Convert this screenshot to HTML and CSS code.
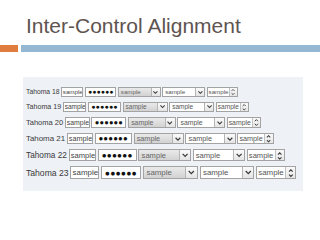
FILE: index.html
```html
<!DOCTYPE html>
<html lang="en">
<head>
    <meta charset="UTF-8">
    <title>Inter-Control Alignment</title>
    <link rel="stylesheet" href="styles.css">
</head>
<body>

<h1 class="title">Inter-Control Alignment</h1>
<div class="rule">
    <div class="rule-accent"></div>
    <div class="rule-main"></div>
</div>

<div class="panel">
    <div class="row s18">
        <span class="label">Tahoma 18</span>
        <span class="box text">sample</span>
        <span class="box pass">&#9679;&#9679;&#9679;&#9679;&#9679;&#9679;</span>
        <span class="box combo fixed"><span class="val">sample</span><span class="drop"><svg viewBox="0 0 10 10"><polyline points="2,3.5 5,6.5 8,3.5"/></svg></span></span>
        <span class="box combo"><span class="val">sample</span><span class="drop"><svg viewBox="0 0 10 10"><polyline points="2,3.5 5,6.5 8,3.5"/></svg></span></span>
        <span class="box spin"><span class="val">sample</span><span class="updown"><svg viewBox="0 0 10 14"><polyline points="2.5,5 5,2.5 7.5,5"/><polyline points="2.5,9 5,11.5 7.5,9"/></svg></span></span>
    </div>
    <div class="row s19">
        <span class="label">Tahoma 19</span>
        <span class="box text">sample</span>
        <span class="box pass">&#9679;&#9679;&#9679;&#9679;&#9679;&#9679;</span>
        <span class="box combo fixed"><span class="val">sample</span><span class="drop"><svg viewBox="0 0 10 10"><polyline points="2,3.5 5,6.5 8,3.5"/></svg></span></span>
        <span class="box combo"><span class="val">sample</span><span class="drop"><svg viewBox="0 0 10 10"><polyline points="2,3.5 5,6.5 8,3.5"/></svg></span></span>
        <span class="box spin"><span class="val">sample</span><span class="updown"><svg viewBox="0 0 10 14"><polyline points="2.5,5 5,2.5 7.5,5"/><polyline points="2.5,9 5,11.5 7.5,9"/></svg></span></span>
    </div>
    <div class="row s20">
        <span class="label">Tahoma 20</span>
        <span class="box text">sample</span>
        <span class="box pass">&#9679;&#9679;&#9679;&#9679;&#9679;&#9679;</span>
        <span class="box combo fixed"><span class="val">sample</span><span class="drop"><svg viewBox="0 0 10 10"><polyline points="2,3.5 5,6.5 8,3.5"/></svg></span></span>
        <span class="box combo"><span class="val">sample</span><span class="drop"><svg viewBox="0 0 10 10"><polyline points="2,3.5 5,6.5 8,3.5"/></svg></span></span>
        <span class="box spin"><span class="val">sample</span><span class="updown"><svg viewBox="0 0 10 14"><polyline points="2.5,5 5,2.5 7.5,5"/><polyline points="2.5,9 5,11.5 7.5,9"/></svg></span></span>
    </div>
    <div class="row s21">
        <span class="label">Tahoma 21</span>
        <span class="box text">sample</span>
        <span class="box pass">&#9679;&#9679;&#9679;&#9679;&#9679;&#9679;</span>
        <span class="box combo fixed"><span class="val">sample</span><span class="drop"><svg viewBox="0 0 10 10"><polyline points="2,3.5 5,6.5 8,3.5"/></svg></span></span>
        <span class="box combo"><span class="val">sample</span><span class="drop"><svg viewBox="0 0 10 10"><polyline points="2,3.5 5,6.5 8,3.5"/></svg></span></span>
        <span class="box spin"><span class="val">sample</span><span class="updown"><svg viewBox="0 0 10 14"><polyline points="2.5,5 5,2.5 7.5,5"/><polyline points="2.5,9 5,11.5 7.5,9"/></svg></span></span>
    </div>
    <div class="row s22">
        <span class="label">Tahoma 22</span>
        <span class="box text">sample</span>
        <span class="box pass">&#9679;&#9679;&#9679;&#9679;&#9679;&#9679;</span>
        <span class="box combo fixed"><span class="val">sample</span><span class="drop"><svg viewBox="0 0 10 10"><polyline points="2,3.5 5,6.5 8,3.5"/></svg></span></span>
        <span class="box combo"><span class="val">sample</span><span class="drop"><svg viewBox="0 0 10 10"><polyline points="2,3.5 5,6.5 8,3.5"/></svg></span></span>
        <span class="box spin"><span class="val">sample</span><span class="updown"><svg viewBox="0 0 10 14"><polyline points="2.5,5 5,2.5 7.5,5"/><polyline points="2.5,9 5,11.5 7.5,9"/></svg></span></span>
    </div>
    <div class="row s23">
        <span class="label">Tahoma 23</span>
        <span class="box text">sample</span>
        <span class="box pass">&#9679;&#9679;&#9679;&#9679;&#9679;&#9679;</span>
        <span class="box combo fixed"><span class="val">sample</span><span class="drop"><svg viewBox="0 0 10 10"><polyline points="2,3.5 5,6.5 8,3.5"/></svg></span></span>
        <span class="box combo"><span class="val">sample</span><span class="drop"><svg viewBox="0 0 10 10"><polyline points="2,3.5 5,6.5 8,3.5"/></svg></span></span>
        <span class="box spin"><span class="val">sample</span><span class="updown"><svg viewBox="0 0 10 14"><polyline points="2.5,5 5,2.5 7.5,5"/><polyline points="2.5,9 5,11.5 7.5,9"/></svg></span></span>
    </div>
</div>

</body>
</html>
```

FILE: styles.css
```css
body {
    margin: 0;
    background-color: #ffffff;
    font-family: 'Liberation Sans', Arial, sans-serif;
}
.title {
    margin: 14px 0 0 26px;
    font-size: 21px;
    font-weight: normal;
    line-height: 24px;
    color: #5e5450;
}
.rule {
    display: flex;
    gap: 3px;
    height: 7px;
    margin-top: 7px;
}
.rule-accent {
    width: 18px;
    background-color: #e07c3e;
}
.rule-main {
    flex: 1;
    background-color: #94b7d3;
}
.panel {
    margin: 25px 17px 0 23px;
    padding: 10px 3px 12px 3px;
    background-color: #eef1f6;
    display: flex;
    flex-direction: column;
    gap: 5px;
}
.row {
    display: flex;
    align-items: center;
    gap: 0.22em;
    color: #222;
}
.s18 { font-size: 6.75px; }
.s19 { font-size: 7.1px; }
.s20 { font-size: 7.5px; }
.s21 { font-size: 7.9px; }
.s22 { font-size: 8.25px; }
.s23 { font-size: 8.6px; }
.label {
    white-space: nowrap;
    color: #3a3a3a;
}
.box {
    display: flex;
    align-items: center;
    flex-shrink: 0;
    box-sizing: border-box;
    height: 1.45em;
    border: 1px solid #a3a3a3;
    background-color: #ffffff;
    white-space: nowrap;
    overflow: hidden;
}
.text {
    width: 3.3em;
    padding: 0 0.15em;
    font-size: 0.92em;
    width: 3.6em;
    height: 1.58em;
    color: #444;
}
.pass {
    width: 4.7em;
    padding: 0 0.35em;
    font-size: 1em;
    letter-spacing: 0.02em;
    color: #111;
}
.combo {
    width: 6.35em;
}
.combo .val,
.spin .val {
    flex: 1;
    min-width: 0;
    overflow: hidden;
    padding: 0 0.3em;
    font-size: 0.92em;
    color: #555;
}
.fixed {
    background: linear-gradient(#eaeaea, #d2d2d2);
}
.fixed .val {
    color: #666;
}
.drop {
    width: 1.2em;
    height: 100%;
    display: flex;
    align-items: center;
    justify-content: center;
    border-left: 1px solid #b5b5b5;
    background: linear-gradient(#fbfbfb, #e4e4e4);
}
.drop svg {
    width: 1em;
    height: 1em;
}
.spin {
    width: 4.6em;
}
.spin .val {
    padding: 0 0.15em;
}
.updown {
    width: 0.95em;
    height: 100%;
    display: flex;
    align-items: center;
    justify-content: center;
    border-left: 1px solid #c0c0c0;
    background: linear-gradient(#fafafa, #e6e6e6);
}
.updown svg {
    width: 0.9em;
    height: 1.2em;
}
svg polyline {
    fill: none;
    stroke: #3a3a3a;
    stroke-width: 1.5;
}
```
